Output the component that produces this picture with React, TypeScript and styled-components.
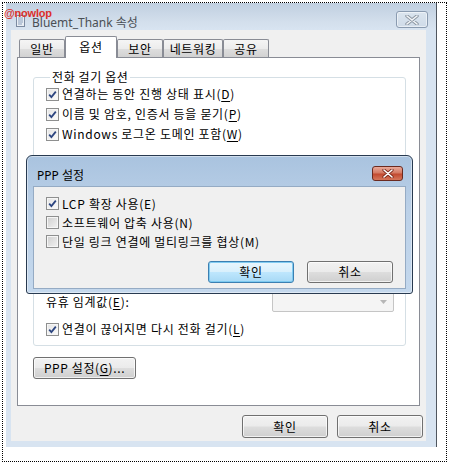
import styled, { createGlobalStyle } from 'styled-components';

const GlobalStyle = createGlobalStyle`
  html, body { margin: 0; padding: 0; background: #fff; }
  body {
    font-family: 'Noto Sans CJK KR', 'Liberation Sans', sans-serif;
    font-size: 12px;
    line-height: 14px;
    color: #000;
  }
  * { box-sizing: border-box; }
`;

function CheckMark() {
  return (
    <svg width='9' height='9' viewBox='0 0 9 9'>
      <path d='M1.2 4.6 L3.4 7 L7.8 1.6' fill='none' stroke='#2c4580' strokeWidth='1.8' />
    </svg>
  );
}

function CheckBox({ label, checked }: { label: React.ReactNode; checked?: boolean }) {
  return (
    <CheckRow>
      <Box $checked={checked}>{checked ? <CheckMark /> : null}</Box>
      <span>{label}</span>
    </CheckRow>
  );
}

const tabs = [
  { name: '일반', w: 46 },
  { name: '옵션', w: 52, active: true },
  { name: '보안', w: 46 },
  { name: '네트워킹', w: 60 },
  { name: '공유', w: 46 },
];

export default function App() {
  return (
    <>
      <GlobalStyle />
      <Page>
        <Frame>
          <Watermark>@nowlop</Watermark>
          <Window>
            <TitleBar>
              <TitleIcon width='9' height='12' viewBox='0 0 9 12'>
                <rect x='0.5' y='0.5' width='8' height='11' fill='#e9eef4' stroke='#7b8aa0' />
                <path d='M2 3 H7 M2 5 H7 M2 7 H7 M2 9 H6' stroke='#8aa0bd' />
              </TitleIcon>
              <TitleText>Bluemt_Thank 속성</TitleText>
              <CloseButton>
                <svg width='14' height='10' viewBox='0 0 14 10'>
                  <path d='M2 1 L12 9 M12 1 L2 9' stroke='#8c97a3' strokeWidth='3.4' strokeLinecap='round' />
                  <path d='M2 1 L12 9 M12 1 L2 9' stroke='#f4f6f8' strokeWidth='1.6' strokeLinecap='round' />
                </svg>
              </CloseButton>
            </TitleBar>
            <Body>
              <Client>
                <TabRow>
                  {tabs.map((t) => (
                    <Tab key={t.name} $w={t.w} $active={t.active}>
                      {t.name}
                    </Tab>
                  ))}
                </TabRow>
                <Panel>
                  <Group $bottom={40}>
                    <Legend>전화 걸기 옵션</Legend>
                    <CheckBox checked label={<>연결하는 동안 진행 상태 표시(<U>D</U>)</>} />
                    <CheckBox checked label={<>이름 및 암호, 인증서 등을 묻기(<U>P</U>)</>} />
                    <CheckBox checked label={<>Windows 로그온 도메인 포함(<U>W</U>)</>} />
                  </Group>
                  <Group $bottom={6} $top={12} $padTop={93}>
                    <DropRow>
                      <span>
                        유휴 임계값(<U>E</U>):
                      </span>
                      <Select>
                        <svg width='7' height='4' viewBox='0 0 7 4'>
                          <path d='M0 0 L7 0 L3.5 4 Z' fill='#b6b6b6' />
                        </svg>
                      </Select>
                    </DropRow>
                    <CheckBox checked label={<>연결이 끊어지면 다시 전화 걸기(<U>L</U>)</>} />
                  </Group>
                  <PppButton>
                    PPP 설정(<U>G</U>)...
                  </PppButton>
                </Panel>
                <ButtonRow>
                  <Button>확인</Button>
                  <Button>취소</Button>
                </ButtonRow>
              </Client>
            </Body>
          </Window>

          <Modal>
            <ModalTitleBar>
              <ModalTitle>PPP 설정</ModalTitle>
              <RedClose>
                <svg width='12' height='9' viewBox='0 0 12 9'>
                  <path d='M2 1 L10 8 M10 1 L2 8' stroke='#7a2a1c' strokeWidth='3.2' strokeLinecap='round' />
                  <path d='M2 1 L10 8 M10 1 L2 8' stroke='#ffffff' strokeWidth='1.6' strokeLinecap='round' />
                </svg>
              </RedClose>
            </ModalTitleBar>
            <ModalClient>
              <ModalChecks>
                <CheckBox checked label='LCP 확장 사용(E)' />
                <CheckBox label='소프트웨어 압축 사용(N)' />
                <CheckBox label='단일 링크 연결에 멀티링크를 협상(M)' />
              </ModalChecks>
              <ModalButtons>
                <Button $primary>확인</Button>
                <Button>취소</Button>
              </ModalButtons>
            </ModalClient>
          </Modal>
        </Frame>
      </Page>
    </>
  );
}

const Page = styled.div`
  width: 450px;
  height: 464px;
  padding: 2px 0 0 2px;
`;

const Frame = styled.div`
  position: relative;
  width: 445px;
  height: 460px;
  border: 1px dotted #000;
`;

const Watermark = styled.span`
  position: absolute;
  left: 1px;
  top: 3px;
  z-index: 5;
  font-family: 'Liberation Sans', sans-serif;
  font-weight: bold;
  font-size: 11px;
  letter-spacing: -0.2px;
  color: #dc2f2a;
`;

const Window = styled.div`
  margin-left: 3px;
  width: 431px;
  height: 444px;
  display: flex;
  flex-direction: column;
  background: #d8e4f1;
  border-right: 1px solid #4f565f;
`;

const TitleBar = styled.div`
  height: 27px;
  display: flex;
  align-items: flex-start;
  padding-left: 10px;
  background: linear-gradient(#c0cfe0, #d3dfec 70%, #d8e4f1);
`;

const TitleIcon = styled.svg`
  margin-top: 12px;
`;

const TitleText = styled.span`
  margin: 12px 0 0 7px;
  font-family: 'Noto Sans', 'Noto Sans CJK KR', sans-serif;
  font-size: 12px;
  line-height: 16px;
  color: #4a4f55;
`;

const CloseButton = styled.div`
  margin: 8px 8px 0 auto;
  width: 32px;
  height: 17px;
  border: 1px solid #8a9bb0;
  border-radius: 3px;
  background: linear-gradient(#dbe5ef, #cfdbe8);
  box-shadow: inset 0 0 0 1px rgba(255, 255, 255, 0.5);
  display: flex;
  align-items: center;
  justify-content: center;
`;

const Body = styled.div`
  flex: 1;
  display: flex;
  padding: 0 10px 6px 5px;
`;

const Client = styled.div`
  flex: 1;
  display: flex;
  flex-direction: column;
  padding: 6px 0 0 6px;
  background: #f0f0f0;
`;

const TabRow = styled.div`
  position: relative;
  z-index: 2;
  height: 22px;
  margin-bottom: -1px;
  padding-left: 2px;
  display: flex;
  align-items: flex-end;
`;

const Tab = styled.div<{ $w: number; $active?: boolean }>`
  width: ${(p) => p.$w}px;
  height: ${(p) => (p.$active ? 22 : 18)}px;
  margin-bottom: ${(p) => (p.$active ? 0 : 1)}px;
  border: 1px solid #898c95;
  border-bottom: none;
  border-radius: 2px 2px 0 0;
  display: flex;
  justify-content: center;
  padding-top: ${(p) => (p.$active ? 3 : 2)}px;
  font-size: 12px;
  letter-spacing: 0.6px;
  background: ${(p) => (p.$active ? '#fff' : 'linear-gradient(#f5f5f5, #ececec 50%, #dedede 51%, #d2d2d2)')};
`;

const Panel = styled.div`
  position: relative;
  z-index: 1;
  width: 403px;
  height: 349px;
  border: 1px solid #898c95;
  background: #fff;
  padding: 12px 13px 0 15px;
  display: flex;
  flex-direction: column;
  align-items: flex-start;
`;

const Group = styled.fieldset<{ $bottom: number; $top?: number; $padTop?: number }>`
  align-self: stretch;
  margin: ${(p) => p.$top || 0}px 0 0 0;
  padding: ${(p) => p.$padTop || 0}px 0 ${(p) => p.$bottom}px 12px;
  min-width: 0;
  border: 1px solid #d5dfe5;
  border-radius: 3px;
  display: flex;
  flex-direction: column;
`;

const Legend = styled.legend`
  margin-left: 4px;
  padding: 0 2px;
  font-size: 12px;
  line-height: 14px;
  letter-spacing: 0.6px;
`;

const CheckRow = styled.div`
  height: 20px;
  display: flex;
  align-items: center;
  gap: 3px;
  font-size: 12px;
  letter-spacing: 0.7px;
  white-space: nowrap;
`;

const Box = styled.span<{ $checked?: boolean }>`
  width: 13px;
  height: 13px;
  flex: none;
  border: 1px solid #8e8f8f;
  background: ${(p) =>
    p.$checked
      ? 'linear-gradient(135deg, #e4e4e4, #fbfbfb)'
      : 'linear-gradient(135deg, #cfcfcf, #f2f2f2)'};
  box-shadow: inset 0 0 0 1px #f6f6f6;
  display: flex;
  align-items: center;
  justify-content: center;
`;

const U = styled.u`
  text-decoration: underline;
  text-underline-offset: 2px;
`;

const DropRow = styled.div`
  height: 21px;
  margin-bottom: 7px;
  display: flex;
  align-items: center;
  justify-content: space-between;
  padding-right: 11px;
  font-size: 12px;
  letter-spacing: 0.7px;
`;

const Select = styled.div`
  width: 122px;
  height: 21px;
  border: 1px solid #c5c5c5;
  border-radius: 2px;
  background: #f4f4f4;
  display: flex;
  align-items: center;
  justify-content: flex-end;
  padding-right: 6px;
`;

const buttonBase = `
  height: 22px;
  border-radius: 3px;
  font-size: 12px;
  letter-spacing: 0.6px;
  display: flex;
  align-items: center;
  justify-content: center;
`;

const PppButton = styled.div`
  ${buttonBase}
  margin-top: 11px;
  width: 103px;
  border: 1px solid #707070;
  background: linear-gradient(#f2f2f2, #ebebeb 48%, #dddddd 52%, #cfcfcf);
  box-shadow: inset 0 0 0 1px rgba(255, 255, 255, 0.7);
`;

const ButtonRow = styled.div`
  margin-top: 9px;
  padding-right: 3px;
  display: flex;
  justify-content: flex-end;
  gap: 9px;
`;

const Button = styled.div<{ $primary?: boolean }>`
  ${buttonBase}
  width: 86px;
  height: 23px;
  border: 1px solid ${(p) => (p.$primary ? '#3c7fb1' : '#707070')};
  background: ${(p) =>
    p.$primary
      ? 'linear-gradient(#eaf6fd, #d9f0fc 48%, #bee6fd 52%, #a7d9f5)'
      : 'linear-gradient(#f2f2f2, #ebebeb 48%, #dddddd 52%, #cfcfcf)'};
  box-shadow: inset 0 0 0 1px ${(p) => (p.$primary ? 'rgba(120, 200, 240, 0.9)' : 'rgba(255, 255, 255, 0.7)')};
`;

const Modal = styled.div`
  position: absolute;
  left: 23px;
  top: 152px;
  z-index: 4;
  width: 387px;
  height: 139px;
  display: flex;
  flex-direction: column;
  padding: 0 6px 4px 6px;
  border: 1px solid #283a50;
  border-radius: 6px 6px 3px 3px;
  background: linear-gradient(#a9c3df, #bcd1e8 40%, #c4d8ed);
  box-shadow: inset 0 0 0 1px rgba(255, 255, 255, 0.45);
`;

const ModalTitleBar = styled.div`
  height: 30px;
  display: flex;
  align-items: flex-start;
`;

const ModalTitle = styled.span`
  margin: 12px 0 0 4px;
  font-family: 'Noto Sans', 'Noto Sans CJK KR', sans-serif;
  font-size: 12px;
  line-height: 16px;
`;

const RedClose = styled.div`
  margin: 10px 3px 0 auto;
  width: 31px;
  height: 15px;
  border: 1px solid #6b2a1f;
  border-radius: 3px;
  background: linear-gradient(#e9a99a, #d47a63 45%, #c24a30 55%, #d5775c);
  display: flex;
  align-items: center;
  justify-content: center;
`;

const ModalClient = styled.div`
  flex: 1;
  display: flex;
  flex-direction: column;
  padding: 7px 12px 0 12px;
  border: 1px solid #95abc4;
  background: #f0f0f0;
`;

const ModalChecks = styled.div`
  display: flex;
  flex-direction: column;
  & > div {
    height: 19px;
  }
`;

const ModalButtons = styled.div`
  margin-top: 10px;
  display: flex;
  justify-content: flex-end;
  gap: 13px;
  & > div {
    height: 22px;
  }
`;
